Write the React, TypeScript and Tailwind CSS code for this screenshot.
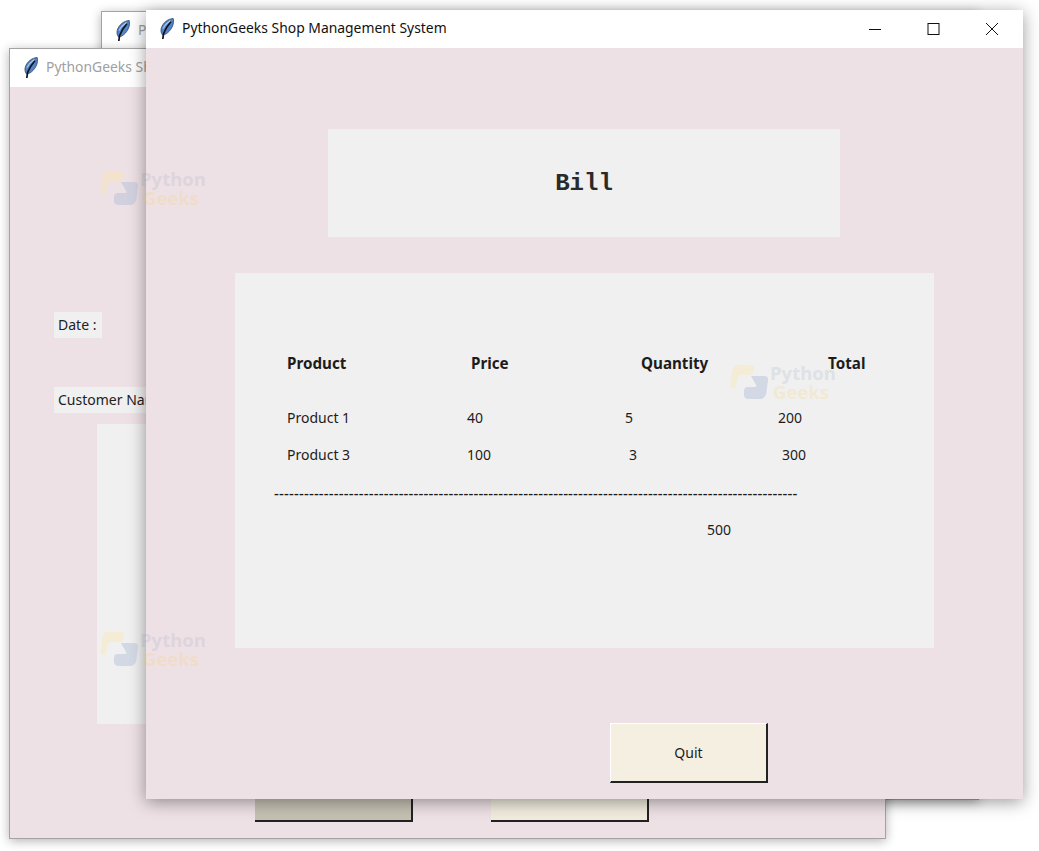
import { JSX } from "react";

const uiFont = "font-['Noto_Sans',sans-serif]";

function Feather() {
  return (
    <svg width="14" height="22" viewBox="0 0 14 22" className="shrink-0">
      <path d="M13.2 0.5 C8 0.8 2.5 5 1.2 10.5 C0.6 13 1.2 15.5 2.6 17 C7.5 16.5 12 11 13.2 6 C13.6 4 13.6 2 13.2 0.5 Z" fill="#5384c6" stroke="#2f4568" strokeWidth="0.8" />
      <path d="M11 3.5 C8 7 5.5 11 3.6 15.5 L2.8 21" fill="none" stroke="#0d1119" strokeWidth="1.7" />
      <path d="M10.5 2.5 C7.5 4.5 4.5 7.5 3 10.5" fill="none" stroke="#b0cdee" strokeWidth="1.1" />
    </svg>
  );
}

function TitleBar({ active, label, children }: { active?: boolean; label: string; children?: JSX.Element }) {
  return (
    <div className="flex h-[38px] shrink-0 items-center bg-white pl-[14px]">
      <Feather />
      <span className={`-mt-[1px] ml-[8px] whitespace-nowrap text-[13.9px] ${active ? "text-[#111111]" : "text-[#a0a0a0]"}`}>
        {label}
      </span>
      {children}
    </div>
  );
}

function WindowButtons() {
  return (
    <div className="ml-auto flex h-full items-center">
      <svg width="58" height="38" viewBox="0 0 58 38">
        <path d="M22 19.5 H34" stroke="#111" strokeWidth="1" />
      </svg>
      <svg width="58" height="38" viewBox="0 0 58 38">
        <rect x="23" y="13.5" width="11" height="11" fill="none" stroke="#111" strokeWidth="1" />
      </svg>
      <svg width="58" height="38" viewBox="0 0 58 38" className="mr-[2px]">
        <path d="M23 13 L35 25 M35 13 L23 25" stroke="#111" strokeWidth="1" />
      </svg>
    </div>
  );
}

function Cell({ width, bold, children }: { width: string; bold?: boolean; children: string }) {
  return <div className={`${width} shrink-0 ${bold ? "font-bold" : ""}`}>{children}</div>;
}

function Watermark({ className }: { className: string }) {
  return (
    <div className={`pointer-events-none absolute z-40 flex h-[40px] w-[106px] items-center ${className}`}>
      <svg width="40" height="37" viewBox="0 0 40 37" className="shrink-0">
        <path d="M7 1 H20 Q25 1 24 5 L23 8 Q22 11 18 11 H11 Q9 11 8 13 L5.5 22 Q5 25 2.5 24 Q0 23 0.5 19 L3 5 Q4 1 7 1 Z" fill="#fbe6a8" fillOpacity="0.38" />
        <path d="M21 12 H34 Q38.5 12 38 16 L36.5 28 Q36 34 31 35 H19 Q14 35 14 31 V27 Q14 23 18 23 H25 Q27 23 26 21 Z" fill="#9fb2d4" fillOpacity="0.36" />
      </svg>
      <div className="font-['Open_Sans',sans-serif] text-[18.5px] font-bold leading-[19px]">
        <div className="text-[#6f84a3] opacity-[0.13]">Python</div>
        <div className="pl-[3px] text-[#f7cf63] opacity-[0.2]">Geeks</div>
      </div>
    </div>
  );
}

export default function App() {
  return (
    <div className={`relative h-[851px] w-[1039px] overflow-hidden bg-white ${uiFont}`}>
      {/* back window */}
      <div className="absolute left-[101px] top-[11px] z-10 flex h-[789px] w-[878px] flex-col border border-[#a3a3a3] bg-[#eee1e5] shadow-[0_2px_10px_rgba(0,0,0,0.3)]">
        <TitleBar label="PythonGeeks Shop Management System" />
      </div>

      {/* middle window */}
      <div className="absolute left-[9px] top-[48px] z-20 flex h-[791px] w-[877px] flex-col border border-[#a3a3a3] bg-[#eee1e5] shadow-[0_2px_10px_rgba(0,0,0,0.3)]">
        <TitleBar label="PythonGeeks Shop Management System" />
        <div className="flex flex-col pl-[44px] pt-[225px] text-[14px] text-[#222222]">
          <div className="flex h-[26px] w-[48px] items-center bg-[#f0f0f0] pb-[1px] pl-[4px]">Date :</div>
          <div className="mt-[49px] flex h-[26px] w-[170px] items-center whitespace-nowrap bg-[#f0f0f0] pb-[1px] pl-[4px]">
            Customer Name :
          </div>
          <div className="ml-[43px] mt-[11px] h-[300px] w-[500px] bg-[#f0f0f0]" />
          <div className="ml-[201px] mt-[38px] flex gap-[78px]">
            <div className="h-[60px] w-[158px] border-b-2 border-r-2 border-[#222222] bg-linear-to-b from-[#ccc8ba] to-[#c4c0b2]" />
            <div className="h-[60px] w-[158px] border-b-2 border-r-2 border-[#222222] bg-[#f1ecde]" />
          </div>
        </div>
      </div>

      {/* front window */}
      <div className="absolute left-[146px] top-[10px] z-30 flex h-[789px] w-[877px] flex-col bg-[#eee1e5] shadow-[0_3px_16px_rgba(0,0,0,0.4)]">
        <TitleBar active label="PythonGeeks Shop Management System">
          <WindowButtons />
        </TitleBar>
        <div className="flex flex-1 flex-col">
          <div className="ml-[182px] mt-[81px] flex h-[108px] w-[512px] items-center justify-center bg-[#f0f0f0] pt-[2px] font-['Liberation_Mono',monospace] text-[24px] font-bold text-[#2a2a2a]">
            Bill
          </div>
          <div className="ml-[89px] mt-[36px] flex h-[375px] w-[699px] flex-col bg-[#f0f0f0] pl-[52px] text-[14px] text-[#1c1c1c]">
            <div className="mt-[78px] flex h-[24px] items-center text-[15.2px]">
              <Cell bold width="w-[184px]">Product</Cell>
              <Cell bold width="w-[170px]">Price</Cell>
              <Cell bold width="w-[187px]">Quantity</Cell>
              <Cell bold width="w-[60px]">Total</Cell>
            </div>
            <div className="mt-[30px] flex h-[24px] items-center">
              <Cell width="w-[180px]">Product 1</Cell>
              <Cell width="w-[158px]">40</Cell>
              <Cell width="w-[153px]">5</Cell>
              <Cell width="w-[40px]">200</Cell>
            </div>
            <div className="mt-[13px] flex h-[24px] items-center">
              <Cell width="w-[180px]">Product 3</Cell>
              <Cell width="w-[162px]">100</Cell>
              <Cell width="w-[153px]">3</Cell>
              <Cell width="w-[40px]">300</Cell>
            </div>
            <div className="-ml-[13px] mt-[15px] h-[24px] overflow-hidden whitespace-nowrap text-[15px] font-medium leading-[24px] tracking-[0.17px]">
              {"-".repeat(105)}
            </div>
            <div className="ml-[420px] mt-[13px] h-[24px] leading-[24px]">500</div>
          </div>
          <div className="ml-[464px] mt-[75px] flex h-[60px] w-[158px] items-center justify-center border border-b-2 border-r-2 border-[#222222] border-l-white border-t-white bg-[#f5efe2] text-[14px] text-[#1c1c1c]">
            Quit
          </div>
        </div>
      </div>

      <Watermark className="left-[100px] top-[168px]" />
      <Watermark className="left-[100px] top-[629px]" />
      <Watermark className="left-[730px] top-[362px]" />
    </div>
  );
}
